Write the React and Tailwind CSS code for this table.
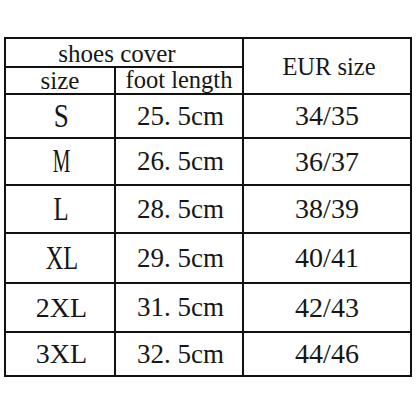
const rows = [
  { size: "S", scale: 0.82, sim: true, foot: "25. 5cm", eur: "34/35" },
  { size: "M", scale: 0.6, sim: true, foot: "26. 5cm", eur: "36/37" },
  { size: "L", scale: 0.75, sim: true, foot: "28. 5cm", eur: "38/39" },
  { size: "XL", scale: 0.74, sim: true, foot: "29. 5cm", eur: "40/41" },
  { size: "2XL", scale: 1, sim: false, foot: "31. 5cm", eur: "42/43" },
  { size: "3XL", scale: 1, sim: false, foot: "32. 5cm", eur: "44/46" },
];

export default function App() {
  return (
    <div className="w-[416px] h-[416px] bg-white pt-[37px] pl-[4px] [font-family:Liberation_Serif,serif] text-[#161616]">
      <div className="grid w-fit grid-cols-[108px_126px_166px] grid-rows-[27px_25px_42px_45px_46px_48px_47px_42px] gap-[2px] bg-[#111] p-[2px]">
        <div className="col-span-2 bg-white flex items-center justify-center text-[25px] leading-none pt-[2px] pr-[14px]">
          shoes cover
        </div>
        <div className="row-span-2 bg-white flex items-center justify-center text-[24.5px] leading-none pt-[3px] pl-[4px]">
          EUR size
        </div>
        <div className="bg-white flex items-center justify-center text-[25px] leading-none pb-[1px]">
          size
        </div>
        <div className="bg-white flex items-center justify-center text-[24.5px] leading-none pb-[1px]">
          foot length
        </div>
        {rows.map((r) => (
          <Row key={r.size} r={r} />
        ))}
      </div>
    </div>
  );
}

function Row({ r }) {
  return (
    <>
      <div className="bg-white flex items-center justify-center pl-[3px]">
        <span
          className={
            r.sim
              ? "inline-block text-[33px] leading-none"
              : "inline-block text-[28px] leading-none"
          }
          style={{ transform: `scaleX(${r.scale})` }}
        >
          {r.size}
        </span>
      </div>
      <div className="bg-white flex items-center justify-center pl-[3px] text-[27px] leading-none whitespace-pre">
        {r.foot}
      </div>
      <div className="bg-white flex items-center justify-center text-[28px] leading-none">
        {r.eur}
      </div>
    </>
  );
}
